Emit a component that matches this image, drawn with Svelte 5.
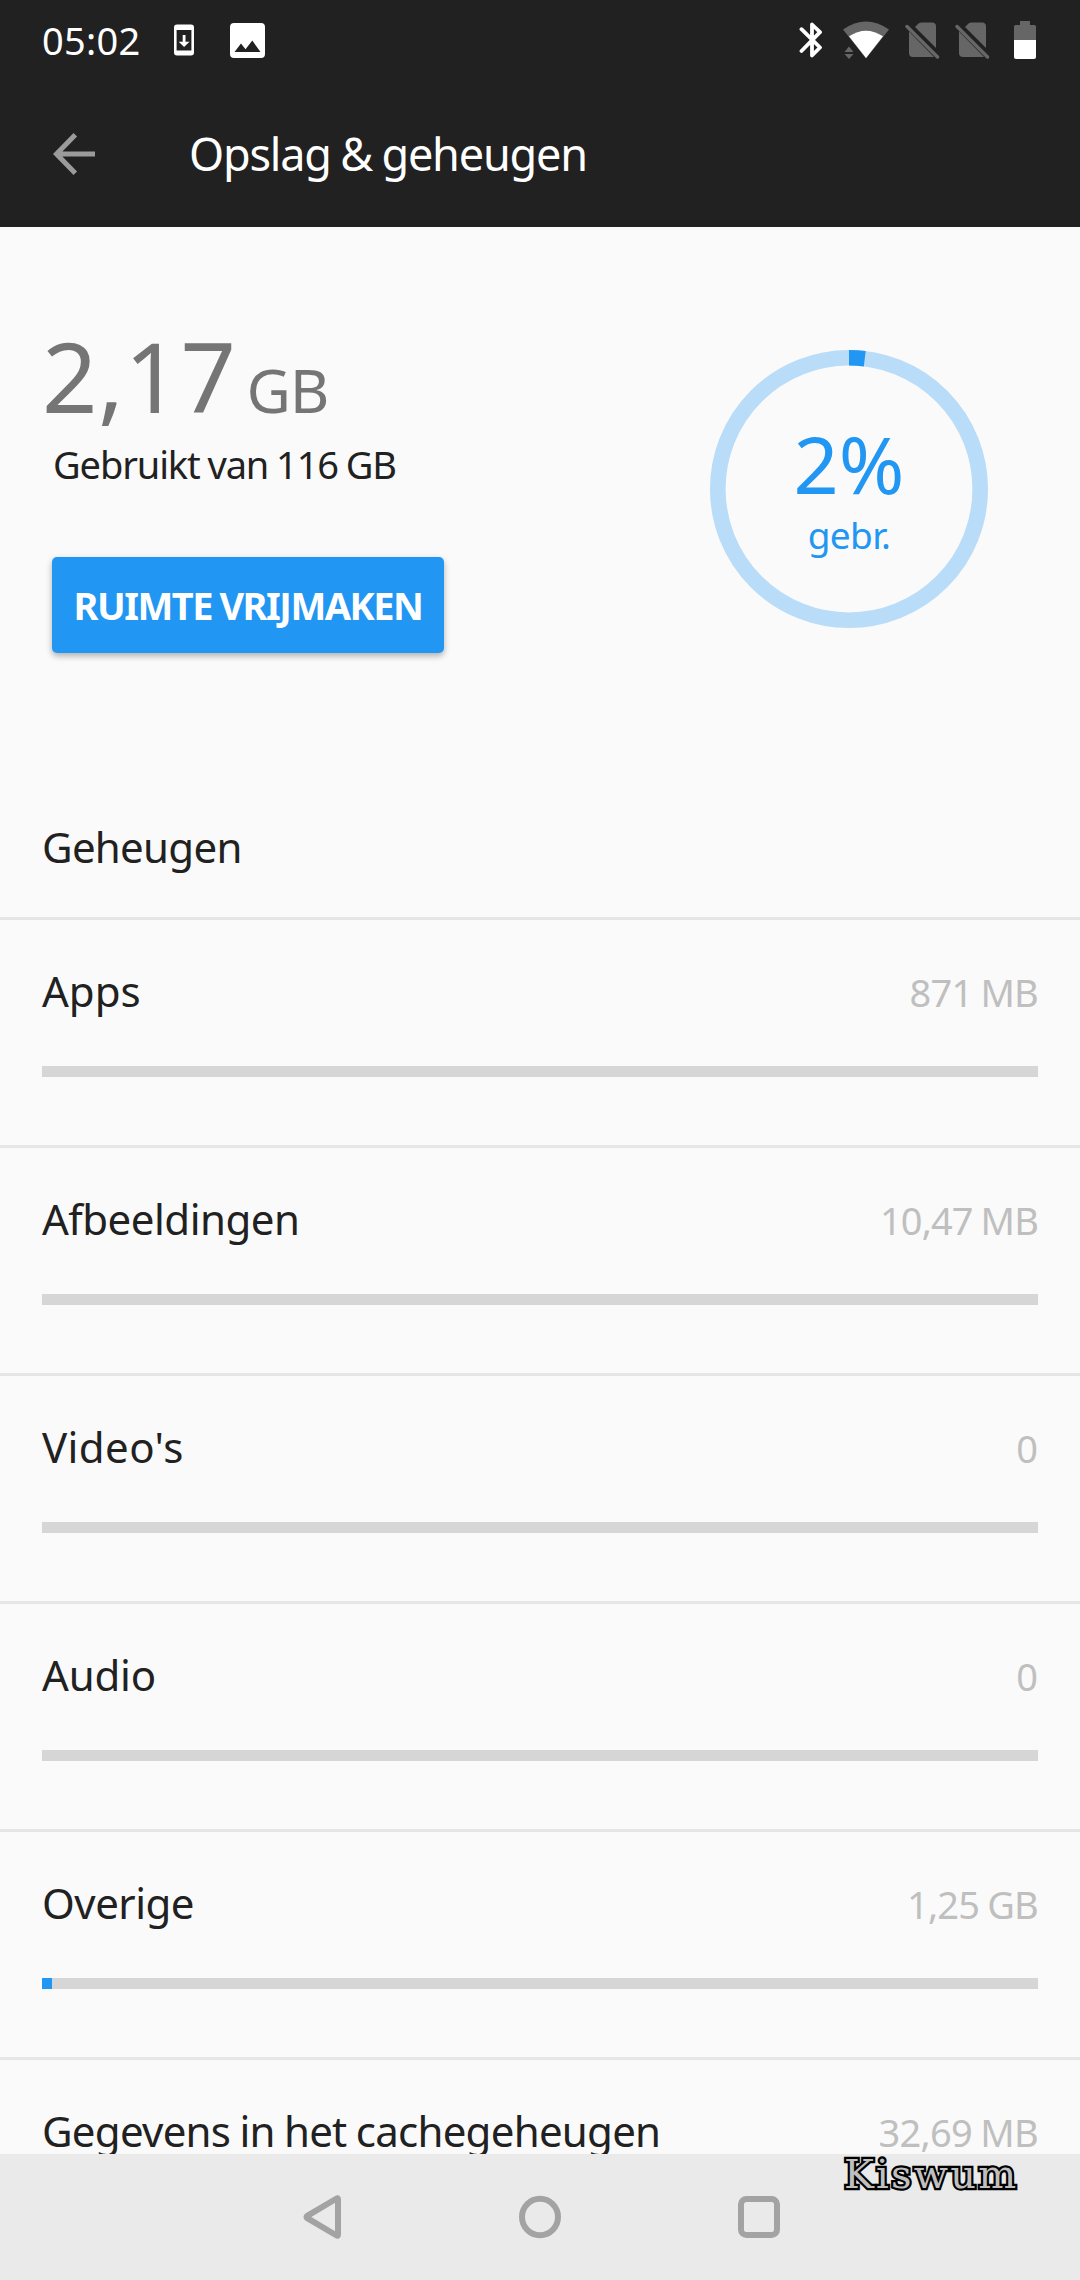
<script lang="ts">
    type Category = {
        name: string;
        size: string;
        used: number;
        nameSpacing: number;
        sizeSpacing: number;
    };

    const total = "116 GB";
    const percentage = 2;

    const categories: Category[] = [
        {name: "Apps", size: "871 MB", used: 0, nameSpacing: 0, sizeSpacing: -0.8},
        {name: "Afbeeldingen", size: "10,47 MB", used: 0, nameSpacing: -0.5, sizeSpacing: -0.9},
        {name: "Video's", size: "0", used: 0, nameSpacing: 0.4, sizeSpacing: 0},
        {name: "Audio", size: "0", used: 0, nameSpacing: -0.2, sizeSpacing: 0},
        {name: "Overige", size: "1,25 GB", used: 1, nameSpacing: -0.5, sizeSpacing: -0.8},
        {name: "Gegevens in het cachegeheugen", size: "32,69 MB", used: 0, nameSpacing: -0.73, sizeSpacing: -0.7}
    ];
</script>

<div class="screen">
    <header>
        <div class="status">
            <span class="clock">05:02</span>
            <svg class="download" width="20" height="32" viewBox="0 0 20 32">
                <path fill="#fff" fill-rule="evenodd" d="M3 0.5h14a3 3 0 0 1 3 3v25a3 3 0 0 1-3 3H3a3 3 0 0 1-3-3v-25a3 3 0 0 1 3-3zM2.6 6v20.500h14.800V6z"/>
                <path fill="#fff" d="M8.700 11h2.800v6.800h4L10.100 23 4.700 17.800h4z"/>
            </svg>
            <svg class="picture" width="35" height="35" viewBox="0 0 35 35">
                <path fill="#fff" fill-rule="evenodd" d="M4 0h27a4 4 0 0 1 4 4v27a4 4 0 0 1-4 4H4a4 4 0 0 1-4-4V4a4 4 0 0 1 4-4zM4.500 29h26L22.300 17.500 15.500 26.300 11 20.500z"/>
            </svg>

            <div class="indicators">
                <svg width="24" height="38" viewBox="0 0 24 38">
                    <path fill="none" stroke="#fff" stroke-width="3.800" stroke-linecap="round" stroke-linejoin="round" d="M2.500 8.200L21 26.500 13 34.500V3.500L21 11.200 2.500 30"/>
                </svg>
                <svg class="wifi" width="46" height="38" viewBox="0 0 46 38">
                    <path fill="#666" d="M0 8.500Q23-7.500 46 8.500L23 37.500z"/>
                    <path fill="#fff" d="M6 15.300Q23 4 40 15.300L23 37z"/>
                    <path fill="#666" d="M1.500 31h9L6 25.500zM1.500 33h9L6 38z"/>
                </svg>
                {#each [1, 2] as sim}
                    <svg class="sim" width="35" height="38" viewBox="0 0 35 38">
                        <path fill="#666" d="M4 10.500L29 36H8a4 4 0 0 1-4-4zM10 6l3.500-3.500Q15 1.500 16.500 1.500H27a4 4 0 0 1 4 4V27z"/>
                        <path stroke="#666" stroke-width="3.400" stroke-linecap="round" d="M2 5.500L32.500 36"/>
                    </svg>
                {/each}
                <svg class="battery" width="22" height="38" viewBox="0 0 22 38">
                    <path fill="#666" d="M6 0h10v4h4.500Q22 4 22 5.500V19H0V5.500Q0 4 1.500 4H6z"/>
                    <path fill="#fff" d="M0 19h22v17q0 2-2 2H2q-2 0-2-2z"/>
                </svg>
            </div>
        </div>

        <div class="toolbar">
            <svg width="42" height="42" viewBox="0 0 42 42">
                <path fill="none" stroke="#9b9b9b" stroke-width="5" d="M42 21H4M22.300 1.800L3.500 21l18.800 19.200"/>
            </svg>
            <h1>Opslag &amp; geheugen</h1>
        </div>
    </header>

    <section class="summary">
        <div class="usage">
            <div class="amount">2,17<small>GB</small></div>
            <p>Gebruikt van {total}</p>
            <button>RUIMTE VRIJMAKEN</button>
        </div>
        <div class="donut">
            <svg class="ring" viewBox="0 0 278 278">
                <circle cx="139" cy="139" r="131.200" pathLength="100" stroke="#b9dcf8"/>
                <circle cx="139" cy="139" r="131.200" pathLength="100" stroke="#2196f3" stroke-dasharray="{percentage * 0.96} 100" transform="rotate(-90 139 139)"/>
            </svg>
            <strong>{percentage}%</strong>
            <span>gebr.</span>
        </div>
    </section>

    <h2>Geheugen</h2>

    <main>
        {#each categories as c}
            <div class="category">
                <div class="line">
                    <span class="name" style="letter-spacing: {c.nameSpacing}px">{c.name}</span>
                    <span class="size" style="letter-spacing: {c.sizeSpacing}px">{c.size}</span>
                </div>
                <div class="bar">
                    <div class="fill" style="width: {c.used}%"></div>
                </div>
            </div>
        {/each}
    </main>

    <nav>
        <svg width="42" height="44" viewBox="0 0 42 44">
            <path d="M38 4.200v35.600q0 1.500-1.400.700L7.300 23.200q-1.700-1.200 0-2.400L36.600 3.500q1.400-.8 1.400.7z"/>
        </svg>
        <svg width="42" height="44" viewBox="0 0 42 44">
            <ellipse cx="21" cy="22" rx="18" ry="18.200"/>
        </svg>
        <svg width="42" height="44" viewBox="0 0 42 44">
            <rect x="3" y="4" width="36" height="36" rx="5.500"/>
        </svg>
        <span class="signature">Kiswum</span>
    </nav>
</div>

<style>
    :global(body) {
        margin: 0;
    }

    .screen {
        display: flex;
        flex-direction: column;
        width: 1080px;
        height: 2280px;
        overflow: hidden;
        background: #fafafa;
        color: #212121;
        font-family: "Noto Sans", sans-serif;
    }

    svg {
        display: block;
        flex: none;
    }

    header {
        height: 227px;
        flex: none;
        background: #212121;
        color: #fff;
    }

    .status {
        display: flex;
        align-items: center;
        height: 80px;
        padding: 0 44px 0 42px;
    }

    .clock {
        width: 132px;
        font-size: 38px;
        line-height: 78px;
        letter-spacing: 0.3px;
    }

    .picture {
        margin-left: 36px;
    }

    .indicators {
        display: flex;
        align-items: center;
        margin-left: auto;
    }

    .wifi {
        margin: 0 16px 0 20px;
    }

    .sim {
        margin-right: 15px;
    }

    .battery {
        margin-left: 9px;
    }

    .toolbar {
        display: flex;
        align-items: center;
        height: 147px;
        padding-left: 53px;
        box-sizing: border-box;
    }

    .toolbar svg {
        margin-right: 94px;
    }

    h1 {
        margin: 0;
        font-size: 45px;
        font-weight: 400;
        line-height: 147px;
        letter-spacing: -1.2px;
        word-spacing: -1px;
    }

    .summary {
        display: flex;
        justify-content: space-between;
        height: 562px;
        flex: none;
        padding: 92px 92px 0 42px;
        box-sizing: border-box;
    }

    .amount {
        height: 120px;
        color: #757575;
        font-size: 97px;
        line-height: 112px;
        letter-spacing: 0.5px;
    }

    .amount small {
        margin-left: 10px;
        font-size: 61px;
        letter-spacing: -1px;
    }

    .usage p {
        margin: 0 0 0 11px;
        font-size: 38px;
        line-height: 50px;
        letter-spacing: -1.1px;
        word-spacing: -1px;
    }

    button {
        display: block;
        width: 392px;
        height: 96px;
        margin: 68px 0 0 10px;
        padding: 0;
        border: 0;
        border-radius: 5px;
        background: #2196f3;
        box-shadow: 0 3px 6px rgba(0, 0, 0, .3);
        color: #fff;
        font: 700 38px/95px "Noto Sans", sans-serif;
        letter-spacing: -1.5px;
        word-spacing: -1px;
        white-space: nowrap;
    }

    .donut {
        display: grid;
        grid-template-rows: 78px 84px 46px 1fr;
        justify-items: center;
        width: 278px;
        height: 278px;
        margin-top: 31px;
        color: #2196f3;
    }

    .ring {
        grid-area: 1 / 1 / 5 / 2;
        width: 278px;
        height: 278px;
    }

    .ring circle {
        fill: none;
        stroke-width: 15.6;
    }

    .donut strong {
        grid-area: 2 / 1;
        font-size: 79px;
        font-weight: 400;
        line-height: 72px;
    }

    .donut span {
        grid-area: 3 / 1;
        font-size: 37px;
        line-height: 45px;
        letter-spacing: -0.6px;
    }

    h2 {
        height: 128px;
        flex: none;
        margin: 0;
        padding-left: 42px;
        box-sizing: border-box;
        font-size: 42px;
        font-weight: 400;
        line-height: 116px;
        letter-spacing: -0.7px;
    }

    main {
        height: 1237px;
        flex: none;
        overflow: hidden;
    }

    .category {
        height: 228px;
        padding: 41px 42px 0;
        border-top: 3px solid #e6e6e6;
        box-sizing: border-box;
    }

    .line {
        display: flex;
        align-items: baseline;
        justify-content: space-between;
        height: 60px;
        line-height: 60px;
    }

    .name {
        font-size: 42px;
        word-spacing: -1px;
    }

    .size {
        color: #bfbfbf;
        font-size: 38px;
        word-spacing: -1px;
    }

    .bar {
        height: 11px;
        margin-top: 45px;
        background: #d6d6d6;
    }

    .fill {
        height: 100%;
        background: #2196f3;
    }

    nav {
        position: relative;
        display: flex;
        justify-content: center;
        gap: 177px;
        height: 126px;
        flex: none;
        padding-top: 41px;
        box-sizing: border-box;
        background: #eaeaea;
    }

    nav svg {
        fill: none;
        stroke: #a3a3a3;
        stroke-width: 6;
    }

    /* lies over the corner of the navigation bar */
    .signature {
        position: absolute;
        top: -4px;
        left: 844px;
        color: #bfbfbf;
        font: 40px/48px "DejaVu Serif", serif;
        letter-spacing: 2.2px;
        paint-order: stroke fill;
        -webkit-text-stroke: 4.5px #000;
    }
</style>
